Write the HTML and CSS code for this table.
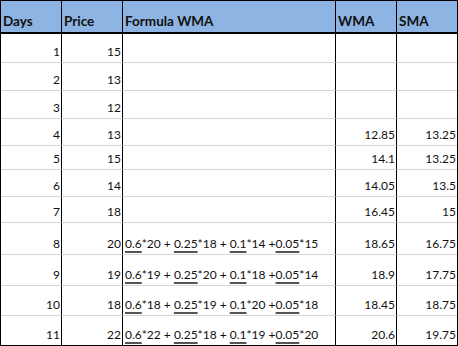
FILE: index.html
```html
<!DOCTYPE html>
<html>
<head>
<meta charset="utf-8">
<link rel="stylesheet" href="styles.css">
</head>
<body>
<div class="sheet">
  <div class="c h">Days</div><div class="c h">Price</div><div class="c h">Formula WMA</div><div class="c h">WMA</div><div class="c h">SMA</div>

  <div class="c n">1</div><div class="c n">15</div><div class="c"></div><div class="c n"></div><div class="c n"></div>
  <div class="c n">2</div><div class="c n">13</div><div class="c"></div><div class="c n"></div><div class="c n"></div>
  <div class="c n">3</div><div class="c n">12</div><div class="c"></div><div class="c n"></div><div class="c n"></div>
  <div class="c n">4</div><div class="c n">13</div><div class="c"></div><div class="c n">12.85</div><div class="c n">13.25</div>
  <div class="c n">5</div><div class="c n">15</div><div class="c"></div><div class="c n">14.1</div><div class="c n">13.25</div>
  <div class="c n">6</div><div class="c n">14</div><div class="c"></div><div class="c n">14.05</div><div class="c n">13.5</div>
  <div class="c n">7</div><div class="c n">18</div><div class="c"></div><div class="c n">16.45</div><div class="c n">15</div>
  <div class="c n">8</div><div class="c n">20</div><div class="c f"><span><u>0.6</u>*20 + <u>0.25</u>*18 + <u>0.1</u>*14 +<u>0.05</u>*15</span></div><div class="c n">18.65</div><div class="c n">16.75</div>
  <div class="c n">9</div><div class="c n">19</div><div class="c f"><span><u>0.6</u>*19 + <u>0.25</u>*20 + <u>0.1</u>*18 +<u>0.05</u>*14</span></div><div class="c n">18.9</div><div class="c n">17.75</div>
  <div class="c n">10</div><div class="c n">18</div><div class="c f"><span><u>0.6</u>*18 + <u>0.25</u>*19 + <u>0.1</u>*20 +<u>0.05</u>*18</span></div><div class="c n">18.45</div><div class="c n">18.75</div>
  <div class="c n last">11</div><div class="c n last">22</div><div class="c f last"><span><u>0.6</u>*22 + <u>0.25</u>*18 + <u>0.1</u>*19 +<u>0.05</u>*20</span></div><div class="c n last">20.6</div><div class="c n last">19.75</div>
</div>
</body>
</html>
```
FILE: styles.css
```css
* { box-sizing: border-box; }
html, body { margin: 0; padding: 0; background: #fff; }
.sheet {
  width: 458px;
  height: 346px;
  border: 1px solid #000;
  display: grid;
  grid-template-columns: 60px 61px 213px 61px 61px;
  grid-template-rows: 33px 29px 28px 28px 27px 24px 27px 26px 32px 31px 30px 29px;
  font-family: Lato, "Open Sans", sans-serif;
  font-size: 12px;
  line-height: 15px;
  color: #111;
}
.c {
  display: flex;
  align-items: flex-end;
  padding: 0 2px 3px 2px;
  border-bottom: 1px solid #d4d4d4;
  border-left: 1px solid #000;
  white-space: nowrap;
  overflow: hidden;
}
.c:nth-child(5n+1) { border-left: none; }
.h {
  background: #8db4e2;
  font-weight: bold;
  font-size: 13.5px;
  line-height: 16px;
  border-bottom: 2px solid #000;
  padding-left: 2px;
}
.n { justify-content: flex-end; padding-right: 1px; }
.f { padding-left: 2px; }
.last { border-bottom: none; }
u {
  text-decoration: underline;
  text-decoration-color: #555;
  text-decoration-thickness: 2px;
  text-underline-offset: 3px;
}
```
